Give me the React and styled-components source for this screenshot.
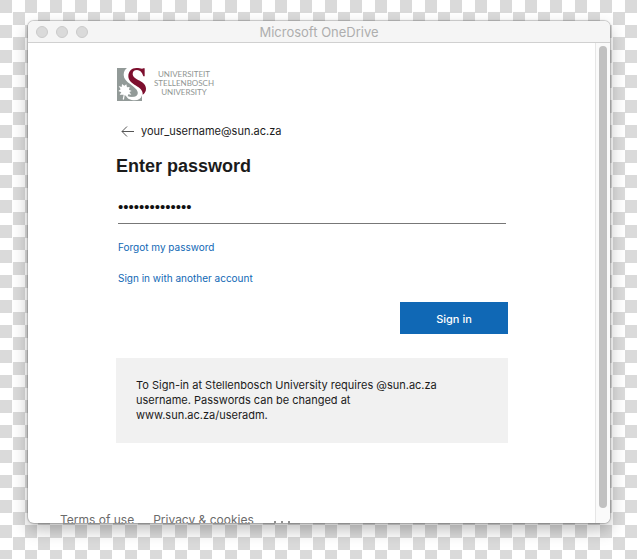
import React from 'react'
import styled, { createGlobalStyle } from 'styled-components'

const GlobalStyle = createGlobalStyle`
  * {
    box-sizing: border-box;
  }

  body {
    margin: 0;
    color: #1b1b1b;
    font-family: Inter, 'Liberation Sans', sans-serif;
    font-size: 11px;
    line-height: 15px;
  }
`

const Desktop = styled.div`
  display: flex;
  height: 100vh;
  padding: 21px 27px 36px 28px;
  background: repeating-conic-gradient(#fff 0 25%, #dadada 0 50%) 0 0 / 25px 25px;
`

const Window = styled.div`
  display: flex;
  flex: 1;
  flex-direction: column;
  overflow: hidden;
  border-radius: 6px;
  background: #fff;
  box-shadow: 0 0 1px 1px rgba(0, 0, 0, 0.2), 0 7px 16px rgba(0, 0, 0, 0.25);
`

const TitleBar = styled.header`
  display: grid;
  flex: none;
  grid-template-columns: 1fr auto 1fr;
  align-items: center;
  height: 22px;
  padding: 0 8px;
  border-bottom: 1px solid #d0d0d0;
  background: #f5f5f5;
`

TitleBar.Lights = styled.div`
  display: flex;
  gap: 8px;
`

TitleBar.Light = styled.span`
  width: 12px;
  height: 12px;
  border: 1px solid #cacaca;
  border-radius: 50%;
  background: #dadada;
`

TitleBar.Title = styled.div`
  padding-top: 2px;
  color: #aeaeae;
  font-size: 13px;
`

const Body = styled.div`
  display: flex;
  flex: 1;
  min-height: 0;
`

const Page = styled.div`
  flex: 1;
  overflow: hidden;
`

const Scroll = styled.div`
  flex: none;
  width: 15px;
  padding: 3px 3px 15px;
  border-left: 1px solid #e6e6e6;
  background: #fafafa;
`

Scroll.Thumb = styled.div`
  width: 8px;
  height: 100%;
  border-radius: 4px;
  background: #c1c1c1;
`

const Form = styled.form`
  display: flex;
  flex-direction: column;
  align-items: flex-start;
  padding: 25px 87px 0 88px;
`

const Logo = styled.div`
  display: flex;
  align-items: flex-start;
  gap: 8px;
  padding-left: 1px;
  color: #8f9593;
  font-family: Lato, sans-serif;
  font-size: 8px;
  line-height: 9px;
  text-align: center;
`

Logo.Name = styled.div`
  padding-top: 2px;
`

const Identity = styled.div`
  display: flex;
  align-items: center;
  gap: 7px;
  margin-top: 23px;
  padding-left: 5px;
`

const BackBtn = styled.button`
  display: flex;
  padding: 0;
  border: none;
  background: none;
  color: #555;
`

const Heading = styled.h1`
  margin: 16px 0 0;
  font-family: 'Liberation Sans', sans-serif;
  font-size: 18px;
  line-height: 22px;
`

const PasswordInput = styled.input.attrs({ type: 'password' })`
  width: calc(100% - 4px);
  height: 34px;
  margin: 13px 2px 0;
  padding: 0;
  border: none;
  border-bottom: 1px solid #777;
  outline: none;
  background: none;
  color: #111;
  font-family: 'Liberation Sans', sans-serif;
  font-size: 15px;
`

const Link = styled.a`
  margin: 16px 2px 0;
  color: #1068b5;
  font-size: 10px;
  text-decoration: none;
`

const SubmitBtn = styled.button.attrs({ type: 'submit' })`
  align-self: flex-end;
  width: 108px;
  height: 32px;
  margin-top: 16px;
  padding: 2px 0 0;
  border: none;
  background: #1068b5;
  color: #fff;
  font-family: inherit;
  font-size: 11px;
  font-weight: 500;
`

const Notice = styled.p`
  width: 100%;
  margin: 24px 0 0;
  padding: 20px 50px 20px 20px;
  background: #f1f1f1;
`

const Footer = styled.footer`
  display: flex;
  gap: 19px;
  margin-top: 69px;
  padding-left: 32px;
`

Footer.Link = styled.a`
  color: #6b6b6b;
  font-size: 12px;
  text-decoration: none;
`

const MoreIcon = () => (
  <svg width="18" height="15" viewBox="0 0 18 15" fill="currentColor" aria-hidden="true">
    <circle cx="2" cy="10" r="1" />
    <circle cx="9" cy="10" r="1" />
    <circle cx="16" cy="10" r="1" />
  </svg>
)

const Crest = () => (
  <svg width="29" height="33" viewBox="0 0 87 99" aria-hidden="true">
    <path fill="#929a98" d="M0 0H75V99H0Z" />
    <path fill="#fff" d="M30 0H87V72L75 82C72 94 60 99 44 96C34 94 30 90 28 84L44 86C56 88 64 82 62 72C58 54 20 44 20 21C20 11 24 4 30 0Z" />
    <path fill="#929a98" d="M42 76C50 78 54 72 50 62C58 70 60 80 50 85C42 88 34 86 30 82Z" />
    <path
      fill="#fff"
      d="M17 94L20 80L8 80L13 73L4 69L11 64L5 54L14 57L15 48L22 53L28 49L30 58L38 57L36 65L44 69L37 72L43 80L34 79L31 87L23 81L21 95Z"
    />
    <path
      fill="#7d0f2e"
      d="M83 1V25H79C75 12 69 6 60 6C51 6 47 11 47 18C47 37 87 37 87 62C87 70 83 76 77 80C80 54 34 52 34 25C34 10 44 0 58 0C68 0 75 4 79 1Z"
    />
  </svg>
)

export default class extends React.Component {
  render() {
    return (
      <>
        <GlobalStyle />

        <Desktop>
          <Window>
            <TitleBar>
              <TitleBar.Lights>
                <TitleBar.Light />
                <TitleBar.Light />
                <TitleBar.Light />
              </TitleBar.Lights>
              <TitleBar.Title>Microsoft OneDrive</TitleBar.Title>
            </TitleBar>

            <Body>
              <Page>
                <Form>
                  <Logo>
                    <Crest />
                    <Logo.Name>
                      UNIVERSITEIT
                      <br />
                      STELLENBOSCH
                      <br />
                      UNIVERSITY
                    </Logo.Name>
                  </Logo>

                  <Identity>
                    <BackBtn type="button" aria-label="Back">
                      <svg width="13" height="11" viewBox="0 0 13 11" fill="none" stroke="currentColor">
                        <path d="M6 0.5L1 5.5L6 10.5M1 5.5H13" />
                      </svg>
                    </BackBtn>
                    <span>your_username@sun.ac.za</span>
                  </Identity>

                  <Heading>Enter password</Heading>

                  <PasswordInput aria-label="Password" defaultValue="stellenbosch14" />

                  <Link href="#forgot">Forgot my password</Link>
                  <Link href="#another">Sign in with another account</Link>

                  <SubmitBtn>Sign in</SubmitBtn>

                  <Notice>
                    To Sign-in at Stellenbosch University requires @sun.ac.za username. Passwords can be changed at
                    www.sun.ac.za/useradm.
                  </Notice>
                </Form>

                <Footer>
                  <Footer.Link href="#terms">Terms of use</Footer.Link>
                  <Footer.Link href="#privacy">Privacy &amp; cookies</Footer.Link>
                  <Footer.Link href="#more" aria-label="More">
                    <MoreIcon />
                  </Footer.Link>
                </Footer>
              </Page>

              <Scroll>
                <Scroll.Thumb />
              </Scroll>
            </Body>
          </Window>
        </Desktop>
      </>
    )
  }
}
